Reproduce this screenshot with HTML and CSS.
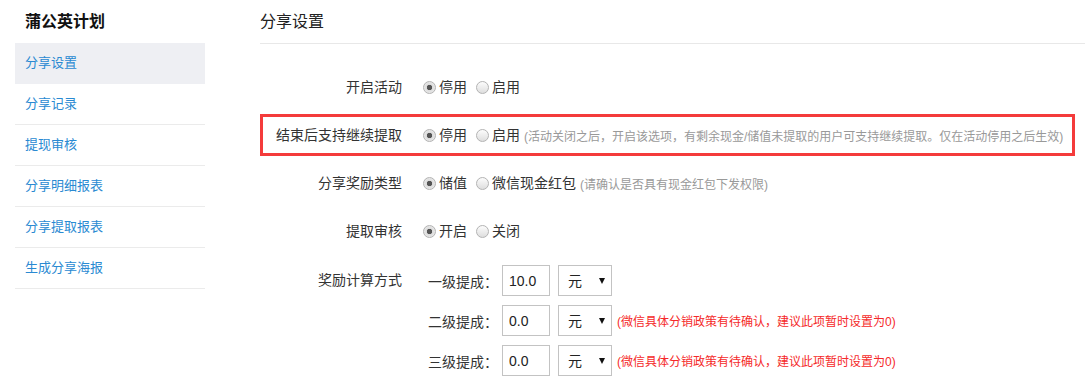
FILE: index.html
```html
<!DOCTYPE html>
<html lang="zh-CN">
<head>
    <meta charset="UTF-8">
    <meta name="viewport" content="width=device-width, initial-scale=1.0">
    <title>分享设置</title>
    <link rel="stylesheet" href="styles.css">
</head>
<body>

    <div class="page">
        <div class="sidebar">
            <h3 class="sidebar-title">蒲公英计划</h3>
            <ul class="nav">
                <li class="active"><a href="#">分享设置</a></li>
                <li><a href="#">分享记录</a></li>
                <li><a href="#">提现审核</a></li>
                <li><a href="#">分享明细报表</a></li>
                <li><a href="#">分享提取报表</a></li>
                <li><a href="#">生成分享海报</a></li>
            </ul>
        </div>

        <div class="main">
            <h2 class="main-title">分享设置</h2>

            <div class="form">
                <div class="form-row">
                    <span class="row-label">开启活动</span>
                    <div class="row-field">
                        <label class="radio"><input type="radio" name="active" checked>停用</label>
                        <label class="radio"><input type="radio" name="active">启用</label>
                    </div>
                </div>

                <div class="form-row highlight">
                    <span class="row-label">结束后支持继续提取</span>
                    <div class="row-field">
                        <label class="radio"><input type="radio" name="keep" checked>停用</label>
                        <label class="radio"><input type="radio" name="keep">启用</label>
                        <span class="hint">(活动关闭之后，开启该选项，有剩余现金/储值未提取的用户可支持继续提取。仅在活动停用之后生效)</span>
                    </div>
                </div>

                <div class="form-row">
                    <span class="row-label">分享奖励类型</span>
                    <div class="row-field">
                        <label class="radio"><input type="radio" name="type" checked>储值</label>
                        <label class="radio"><input type="radio" name="type">微信现金红包</label>
                        <span class="hint">(请确认是否具有现金红包下发权限)</span>
                    </div>
                </div>

                <div class="form-row">
                    <span class="row-label">提取审核</span>
                    <div class="row-field">
                        <label class="radio"><input type="radio" name="audit" checked>开启</label>
                        <label class="radio"><input type="radio" name="audit">关闭</label>
                    </div>
                </div>

                <div class="form-row reward">
                    <span class="row-label">奖励计算方式</span>
                    <div class="levels">
                        <div class="level">
                            <span class="level-name">一级提成：</span>
                            <input class="num" type="text" value="10.0">
                            <span class="select-wrap"><select><option>元</option><option>%</option></select></span>
                        </div>
                        <div class="level">
                            <span class="level-name">二级提成：</span>
                            <input class="num" type="text" value="0.0">
                            <span class="select-wrap"><select><option>元</option><option>%</option></select></span>
                            <span class="warn">(微信具体分销政策有待确认，建议此项暂时设置为0)</span>
                        </div>
                        <div class="level">
                            <span class="level-name">三级提成：</span>
                            <input class="num" type="text" value="0.0">
                            <span class="select-wrap"><select><option>元</option><option>%</option></select></span>
                            <span class="warn">(微信具体分销政策有待确认，建议此项暂时设置为0)</span>
                        </div>
                    </div>
                </div>
            </div>
        </div>
    </div>

</body>
</html>
```

FILE: styles.css
```css
body {
    margin: 0;
    font-family: 'Liberation Sans', 'Noto Sans CJK SC', sans-serif;
    font-size: 14px;
    color: #333;
    background-color: #fff;
}

.page {
    display: flex;
    align-items: flex-start;
}

/* sidebar */
.sidebar {
    width: 190px;
    margin-left: 15px;
}

.sidebar-title {
    margin: 0;
    height: 43px;
    line-height: 43px;
    padding-left: 10px;
    font-size: 16px;
    font-weight: bold;
    color: #111;
}

.nav {
    list-style: none;
    margin: 0;
    padding: 0;
}

.nav li {
    height: 40px;
    line-height: 40px;
    border-bottom: 1px solid #ebebeb;
}

.nav li.active {
    background-color: #eeeff3;
    border-bottom-color: #eeeff3;
}

.nav a {
    display: block;
    padding-left: 10px;
    font-size: 13px;
    color: #2a8ad2;
    text-decoration: none;
}

/* main */
.main {
    flex: 1;
    margin-left: 55px;
}

.main-title {
    margin: 0;
    height: 43px;
    line-height: 44px;
    font-size: 16px;
    font-weight: normal;
    color: #222;
    border-bottom: 1px solid #e8e8e8;
}

.form {
    margin-top: 22px;
    margin-right: 10px;
}

.form-row {
    display: flex;
    align-items: center;
    box-sizing: border-box;
    height: 42px;
    margin-bottom: 6px;
    border: 3px solid transparent;
}

.form-row.highlight {
    border-color: #f43b3b;
}

.row-label {
    width: 139px;
    margin-right: 21px;
    text-align: right;
    line-height: 20px;
}

.row-field {
    display: flex;
    align-items: center;
    white-space: nowrap;
}

.radio {
    display: inline-flex;
    align-items: center;
    margin-right: 9px;
    line-height: 20px;
}

.radio input {
    appearance: none;
    -webkit-appearance: none;
    width: 13px;
    height: 13px;
    margin: 0 3px 0 0;
    border: 1px solid #b3b3b3;
    border-radius: 50%;
    background: linear-gradient(#fcfcfc, #dedede);
    box-sizing: border-box;
}

.radio input:checked {
    background: radial-gradient(circle, #555 0, #555 2.4px, #dcdcdc 3px, #f2f2f2 100%);
}

.hint {
    margin-left: -5px;
    font-size: 12px;
    color: #999;
}

/* reward levels */
.form-row.reward {
    height: auto;
    align-items: flex-start;
}

.reward .row-label {
    margin-top: 4px;
    line-height: 31px;
}

.levels {
    display: flex;
    flex-direction: column;
    gap: 9px;
    margin-top: 4px;
}

.level {
    display: flex;
    align-items: center;
    height: 31px;
}

.level-name {
    width: 75px;
    margin-right: 4px;
    text-align: right;
}

.num {
    box-sizing: border-box;
    width: 48px;
    height: 31px;
    margin: 0 8px 0 0;
    padding: 0 0 0 6px;
    border: 1px solid #c3c3c3;
    font-family: inherit;
    font-size: 14px;
    color: #222;
    outline: none;
}

.select-wrap {
    position: relative;
    display: inline-block;
    height: 31px;
}

.select-wrap select {
    appearance: none;
    -webkit-appearance: none;
    box-sizing: border-box;
    width: 54px;
    height: 31px;
    padding: 0 0 0 9px;
    border: 1px solid #c3c3c3;
    border-radius: 0;
    background-color: #fff;
    font-family: inherit;
    font-size: 14px;
    color: #222;
}

.select-wrap::after {
    content: "";
    position: absolute;
    right: 7px;
    top: 13px;
    border-left: 3px solid transparent;
    border-right: 3px solid transparent;
    border-top: 6px solid #111;
    pointer-events: none;
}

.warn {
    margin-left: 5px;
    font-size: 12px;
    color: #f52a2a;
}
```
